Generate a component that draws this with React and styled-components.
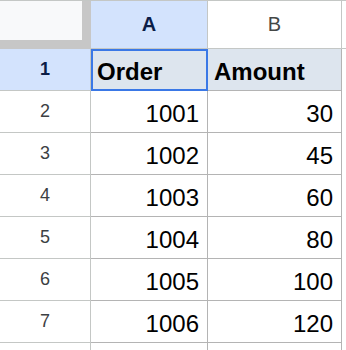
import React from 'react';
import styled, { createGlobalStyle } from 'styled-components';

const GlobalStyle = createGlobalStyle`
  html, body {
    margin: 0;
    padding: 0;
    background: #ffffff;
  }
  body {
    font-family: "Liberation Sans", Arial, sans-serif;
  }
`;

const rows = [
  ['1001', '30'],
  ['1002', '45'],
  ['1003', '60'],
  ['1004', '80'],
  ['1005', '100'],
  ['1006', '120'],
];

export default function App() {
  return (
    <>
      <GlobalStyle />
      <Sheet>
        <Corner>
          <CornerBox />
        </Corner>
        <ColHeader $active>A</ColHeader>
        <ColHeader>B</ColHeader>
        <Filler $header />

        <RowHeader $active>1</RowHeader>
        <Cell $head $selected>Order</Cell>
        <Cell $head>Amount</Cell>
        <Filler />

        {rows.map(([order, amount], i) => (
          <React.Fragment key={order}>
            <RowHeader>{i + 2}</RowHeader>
            <Cell $num>{order}</Cell>
            <Cell $num>{amount}</Cell>
            <Filler />
          </React.Fragment>
        ))}

        <RowHeader $empty />
        <Cell />
        <Cell />
        <Filler />
      </Sheet>
    </>
  );
}

const Sheet = styled.div`
  display: grid;
  grid-template-columns: 91px 117px 134px 1fr;
  grid-template-rows: 49px repeat(8, 42px);
  width: 346px;
  height: 350px;
  overflow: hidden;
  background: #ffffff;
`;

const Corner = styled.div`
  box-sizing: border-box;
  border-top: 1px solid #c4c7c5;
  background: #c7c7c7;
  display: flex;
  align-items: flex-start;
`;

const CornerBox = styled.div`
  width: 82px;
  height: 39px;
  background: #f8f9fa;
`;

const ColHeader = styled.div`
  box-sizing: border-box;
  border-top: 1px solid #c4c7c5;
  border-right: 1px solid #c4c7c5;
  border-bottom: 1px solid #c4c7c5;
  background: ${p => (p.$active ? '#d3e3fd' : '#ffffff')};
  color: ${p => (p.$active ? '#0b1d47' : '#444746')};
  font-weight: ${p => (p.$active ? 700 : 400)};
  font-size: 20px;
  display: flex;
  align-items: center;
  justify-content: center;
`;

const Filler = styled.div`
  box-sizing: border-box;
  border-top: ${p => (p.$header ? '1px solid #c4c7c5' : 'none')};
  border-bottom: ${p => (p.$header ? '1px solid #c4c7c5' : 'none')};
  background: #ffffff;
`;

const RowHeader = styled.div`
  box-sizing: border-box;
  border-right: 1px solid #c4c7c5;
  border-bottom: ${p => (p.$empty ? 'none' : '1px solid #c4c7c5')};
  background: ${p => (p.$active ? '#d3e3fd' : '#ffffff')};
  color: ${p => (p.$active ? '#0b1d47' : '#3c4043')};
  font-weight: ${p => (p.$active ? 700 : 400)};
  font-size: 18px;
  display: flex;
  align-items: center;
  justify-content: center;
`;

const Cell = styled.div`
  position: relative;
  box-sizing: border-box;
  border-right: 1px solid #b4b4b4;
  border-bottom: 1px solid #b4b4b4;
  background: ${p => (p.$head ? '#dde5ee' : '#ffffff')};
  color: #000000;
  font-size: 24px;
  font-weight: ${p => (p.$head ? 700 : 400)};
  display: flex;
  align-items: flex-end;
  justify-content: ${p => (p.$num ? 'flex-end' : 'flex-start')};
  padding: 0 8px 4px 6px;
  line-height: normal;

  ${p =>
    p.$selected &&
    `
    &::after {
      content: '';
      position: absolute;
      top: 0;
      left: 0;
      right: -1px;
      bottom: -1px;
      border: 2px solid #3a78e6;
      pointer-events: none;
    }
  `}
`;
